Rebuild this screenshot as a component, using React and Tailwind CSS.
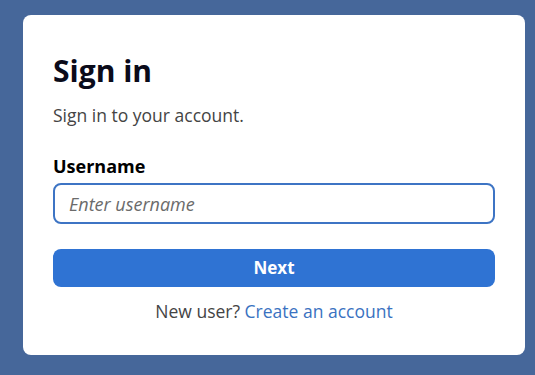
import React from 'react';

const SignIn = () => {
  return (
    <div className="min-h-screen bg-[#46679a] pt-[15px] pl-[23px] font-['Open_Sans',sans-serif]">
      <div className="w-[502px] h-[340px] bg-white rounded-lg px-[30px] pt-[38px]">
        <h1 className="text-[30px] leading-[36px] font-bold text-[#0b0b1a]">Sign in</h1>
        <p className="mt-[14px] text-[17.5px] leading-6 text-[#444]">Sign in to your account.</p>

        <form className="mt-[27px]" onSubmit={(e) => e.preventDefault()}>
          <label className="block text-[18px] leading-6 font-bold text-black">Username</label>
          <input
            type="text"
            placeholder="Enter username"
            className="mt-[5px] w-full h-[41px] border-2 border-[#3d74c4] rounded-lg px-[14px] text-[18px] italic placeholder:text-[#6b6b6b] outline-none"
          />
          <button
            type="submit"
            className="mt-[25px] w-full h-[38px] bg-[#2f73d3] rounded-lg text-white text-[17px] font-bold"
          >
            Next
          </button>
        </form>

        <p className="mt-[12px] text-center text-[17.5px] leading-6 text-[#444]">
          New user? <a href="#" className="text-[#3a72c1]">Create an account</a>
        </p>
      </div>
    </div>
  );
};

export default function App() {
  return <SignIn />;
}
